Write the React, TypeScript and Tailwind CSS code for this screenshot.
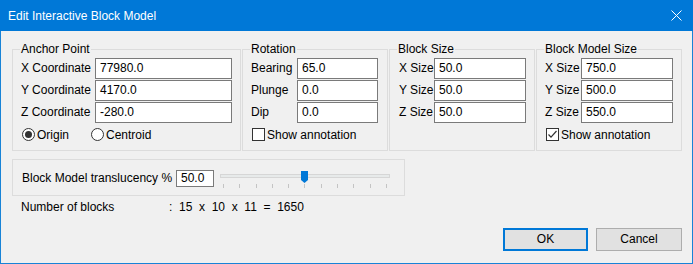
import React from "react";

function Group({
  title,
  width,
  children,
}: {
  title: string;
  width: string;
  children: React.ReactNode;
}) {
  return (
    <div className={`relative h-[102px] border border-[#dcdcdc] pt-[8px] pl-[8px] ${width}`}>
      <span className="absolute -top-[8px] left-[7px] bg-[#f0f0f0] px-[1px] leading-[14px]">
        {title}
      </span>
      {children}
    </div>
  );
}

function Field({
  label,
  value,
  labelW,
  inputW,
}: {
  label: string;
  value: string;
  labelW: string;
  inputW: string;
}) {
  return (
    <div className="flex items-start h-[22px]">
      <span className={`${labelW} leading-[21px] whitespace-nowrap`}>{label}</span>
      <div className={`${inputW} h-[21px] border border-[#7a7a7a] bg-white pl-[4px] leading-[19px]`}>
        {value}
      </div>
    </div>
  );
}

function Radio({ checked, label }: { checked?: boolean; label: string }) {
  return (
    <div className="flex items-center gap-[2px]">
      <span className="w-[13px] h-[13px] rounded-full border border-[#333] bg-white flex items-center justify-center">
        {checked && <span className="w-[7px] h-[7px] rounded-full bg-[#333]" />}
      </span>
      <span className="leading-[14px]">{label}</span>
    </div>
  );
}

function Check({ checked, label }: { checked?: boolean; label: string }) {
  return (
    <div className="flex items-center gap-[2px] ml-[1px]">
      <span className="w-[13px] h-[13px] border border-[#333] bg-white flex items-center justify-center">
        {checked && (
          <svg width="11" height="11" viewBox="0 0 11 11">
            <polyline points="1.5,5.5 4,8.2 9.5,2" fill="none" stroke="#333" strokeWidth="1.2" />
          </svg>
        )}
      </span>
      <span className="leading-[14px]">{label}</span>
    </div>
  );
}

function Slider() {
  const ticks = Array.from({ length: 11 }, (_, i) => i);
  return (
    <div className="relative w-[170px] h-[20px]">
      <div className="absolute left-0 right-0 top-[4px] h-[4px] bg-[#e7eaea] border border-[#d6d6d6]" />
      <svg className="absolute left-[81px] top-[1px]" width="7" height="12" viewBox="0 0 7 12">
        <polygon points="0,0 7,0 7,9 3.5,12 0,9" fill="#0078d7" />
      </svg>
      <div className="absolute left-[3px] right-[3px] top-[14px] h-[4px] flex justify-between">
        {ticks.map((t) => (
          <span key={t} className="w-[1px] h-[4px] bg-[#c4c4c4]" />
        ))}
      </div>
    </div>
  );
}

export default function App() {
  return (
    <div className="w-[693px] h-[264px] flex flex-col bg-[#f0f0f0] font-['Liberation_Sans',Arial,sans-serif] text-[12px] text-black">
      {/* Title bar */}
      <div className="h-[31px] shrink-0 bg-[#0078d7] flex items-center pl-[8px] pr-[11px] text-white">
        <span className="flex-1 leading-[14px]">Edit Interactive Block Model</span>
        <svg width="11" height="11" viewBox="0 0 11 11">
          <path d="M0.5 0.5 L10.5 10.5 M10.5 0.5 L0.5 10.5" stroke="#fff" strokeWidth="1" />
        </svg>
      </div>

      <div className="flex-1 flex flex-col border-x border-b border-[#1883d7] pl-[11px] pr-[10px] pt-[18px]">
        {/* Groups */}
        <div className="flex gap-[1px]">
          <Group title="Anchor Point" width="w-[229px]">
            <Field label="X Coordinate" value="77980.0" labelW="w-[74px]" inputW="w-[137px]" />
            <Field label="Y Coordinate" value="4170.0" labelW="w-[74px]" inputW="w-[137px]" />
            <Field label="Z Coordinate" value="-280.0" labelW="w-[74px]" inputW="w-[137px]" />
            <div className="flex items-center h-[21px] ml-[1px]">
              <div className="w-[69px]">
                <Radio checked label="Origin" />
              </div>
              <Radio label="Centroid" />
            </div>
          </Group>
          <Group title="Rotation" width="w-[146px]">
            <Field label="Bearing" value="65.0" labelW="w-[46px]" inputW="w-[81px]" />
            <Field label="Plunge" value="0.0" labelW="w-[46px]" inputW="w-[81px]" />
            <Field label="Dip" value="0.0" labelW="w-[46px]" inputW="w-[81px]" />
            <div className="flex items-center h-[21px]">
              <Check label="Show annotation" />
            </div>
          </Group>
          <Group title="Block Size" width="w-[146px]">
            <div className="pl-[1px]">
              <Field label="X Size" value="50.0" labelW="w-[35px]" inputW="w-[92px]" />
              <Field label="Y Size" value="50.0" labelW="w-[35px]" inputW="w-[92px]" />
              <Field label="Z Size" value="50.0" labelW="w-[35px]" inputW="w-[92px]" />
            </div>
          </Group>
          <Group title="Block Model Size" width="w-[146px]">
            <Field label="X Size" value="750.0" labelW="w-[36px]" inputW="w-[92px]" />
            <Field label="Y Size" value="500.0" labelW="w-[36px]" inputW="w-[92px]" />
            <Field label="Z Size" value="550.0" labelW="w-[36px]" inputW="w-[92px]" />
            <div className="flex items-center h-[21px]">
              <Check checked label="Show annotation" />
            </div>
          </Group>
        </div>

        {/* Translucency */}
        <div className="mt-[8px] w-[393px] h-[37px] border border-[#dcdcdc] flex items-start pl-[9px] pt-[10px]">
          <span className="w-[154px] leading-[17px] whitespace-nowrap">Block Model translucency %</span>
          <div className="w-[38px] h-[17px] border border-[#7a7a7a] bg-white pl-[4px] leading-[15px]">
            50.0
          </div>
          <div className="ml-[6px]">
            <Slider />
          </div>
        </div>

        {/* Number of blocks */}
        <div className="mt-[4px] flex pl-[9px] leading-[14px]">
          <span className="w-[148px]">Number of blocks</span>
          <span className="whitespace-pre">:  15  x  10  x  11  =  1650</span>
        </div>

        {/* Buttons */}
        <div className="mt-[14px] flex justify-end gap-[8px]">
          <button className="w-[85px] h-[23px] border-2 border-[#0078d7] bg-[#e1e1e1] leading-[19px]">
            OK
          </button>
          <button className="w-[86px] h-[23px] border border-[#adadad] bg-[#e1e1e1] leading-[21px]">
            Cancel
          </button>
        </div>
      </div>
    </div>
  );
}
